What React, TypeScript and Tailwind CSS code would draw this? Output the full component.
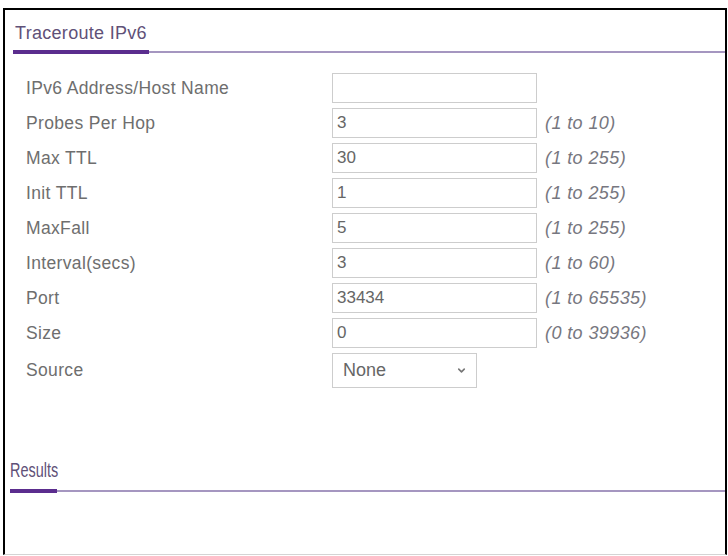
import React from "react";
import { ChevronDown } from "lucide-react";

const rows = [
  { label: "IPv6 Address/Host Name", value: "", hint: "" },
  { label: "Probes Per Hop", value: "3", hint: "(1 to 10)" },
  { label: "Max TTL", value: "30", hint: "(1 to 255)" },
  { label: "Init TTL", value: "1", hint: "(1 to 255)" },
  { label: "MaxFall", value: "5", hint: "(1 to 255)" },
  { label: "Interval(secs)", value: "3", hint: "(1 to 60)" },
  { label: "Port", value: "33434", hint: "(1 to 65535)" },
  { label: "Size", value: "0", hint: "(0 to 39936)" },
];

export default function App() {
  return (
    <div
      className="w-[728px] h-[556px] bg-white pt-[8px] pl-[3px] pr-[1px]"
      style={{ fontFamily: '"Liberation Sans", Arial, sans-serif' }}
    >
      <div className="h-[547px] border-t-2 border-l-2 border-r-2 border-b border-t-black border-l-black border-r-black border-b-[#d4d4d4] flex flex-col">
        {/* Title header */}
        <div className="ml-[8px] mt-[13px] flex border-b-2 border-[#a596c0]">
          <span className="pl-[2px] pr-[2px] pb-[6px] -mb-[3px] border-b-4 border-[#5b2d8e] text-[18px] leading-[21px] tracking-[0.3px] text-[#5f5178]">
            Traceroute IPv6
          </span>
        </div>

        {/* Form */}
        <div className="mt-[20px] pl-[21px] flex flex-col gap-[5px]">
          {rows.map((r) => (
            <div key={r.label} className="flex items-center h-[30px]">
              <div className="w-[306px] text-[17.5px] tracking-[0.35px] text-[#6e6e6e]">
                {r.label}
              </div>
              <div className="w-[205px] h-[30px] border border-[#cdcdcd] bg-white flex items-center pl-[4px] text-[17px] text-[#666]">
                {r.value}
              </div>
              {r.hint && (
                <div className="ml-[8px] italic text-[18px] tracking-[0.4px] text-[#777780]">
                  {r.hint}
                </div>
              )}
            </div>
          ))}
          <div className="flex items-center h-[35px]">
            <div className="w-[306px] text-[17.5px] tracking-[0.35px] text-[#6e6e6e]">
              Source
            </div>
            <div className="w-[145px] h-[35px] border border-[#cdcdcd] bg-white flex items-center justify-between pl-[10px] pr-[9px] text-[18px] text-[#666]">
              <span>None</span>
              <ChevronDown size={11} strokeWidth={3.5} color="#777" />
            </div>
          </div>
        </div>

        {/* Results header */}
        <div className="ml-[5px] mt-[71px] flex border-b-2 border-[#a596c0]">
          <span className="w-[47px] pb-[7px] -mb-[3px] border-b-4 border-[#5b2d8e] text-[19.5px] leading-[23px] text-[#5f5178] whitespace-nowrap">
            <span className="inline-block origin-left scale-x-[0.74]">Results</span>
          </span>
        </div>
      </div>
    </div>
  );
}
